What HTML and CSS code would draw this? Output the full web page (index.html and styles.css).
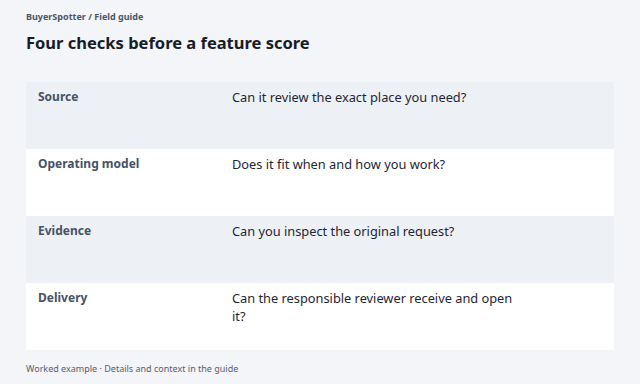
FILE: index.html
```html
<!DOCTYPE html>
<html lang="en">
<head>
<meta charset="utf-8">
<link rel="stylesheet" href="styles.css">
</head>
<body>
<main class="page">
  <div class="crumb">BuyerSpotter / Field guide</div>
  <h1 class="title">Four checks before a feature score</h1>
  <div class="table">
    <div class="row shade">
      <div class="label">Source</div>
      <div class="value">Can it review the exact place you need?</div>
    </div>
    <div class="row">
      <div class="label">Operating model</div>
      <div class="value">Does it fit when and how you work?</div>
    </div>
    <div class="row shade">
      <div class="label">Evidence</div>
      <div class="value">Can you inspect the original request?</div>
    </div>
    <div class="row">
      <div class="label">Delivery</div>
      <div class="value">Can the responsible reviewer receive and open it?</div>
    </div>
  </div>
  <div class="foot">Worked example · Details and context in the guide</div>
</main>
</body>
</html>
```
FILE: styles.css
```css
* { box-sizing: border-box; }
html, body { margin: 0; padding: 0; }
body {
  background: #f3f5f8;
  font-family: "Noto Sans", "Open Sans", sans-serif;
  color: #1c2230;
  width: 640px;
  height: 384px;
  overflow: hidden;
}
.page {
  padding: 10px 26px 0 26px;
  display: flex;
  flex-direction: column;
}
.crumb {
  font-size: 9px;
  font-weight: 700;
  color: #4b5568;
  line-height: 14px;
}
.title {
  margin: 7px 0 0 0;
  font-size: 16.5px;
  font-weight: 700;
  line-height: 24px;
  color: #171c28;
}
.table {
  margin-top: 27px;
  display: flex;
  flex-direction: column;
}
.row {
  display: grid;
  grid-template-columns: 194px 1fr;
  min-height: 67px;
  padding: 6px 12px 4px;
  background: #ffffff;
}
.row.shade { background: #edf1f5; }
.label {
  font-size: 12px;
  font-weight: 700;
  color: #465266;
  line-height: 18px;
}
.value {
  font-size: 12.8px;
  line-height: 18px;
  color: #1f2533;
  max-width: 290px;
}
.foot {
  margin-top: 12px;
  font-size: 9px;
  line-height: 14px;
  color: #566072;
}
```
